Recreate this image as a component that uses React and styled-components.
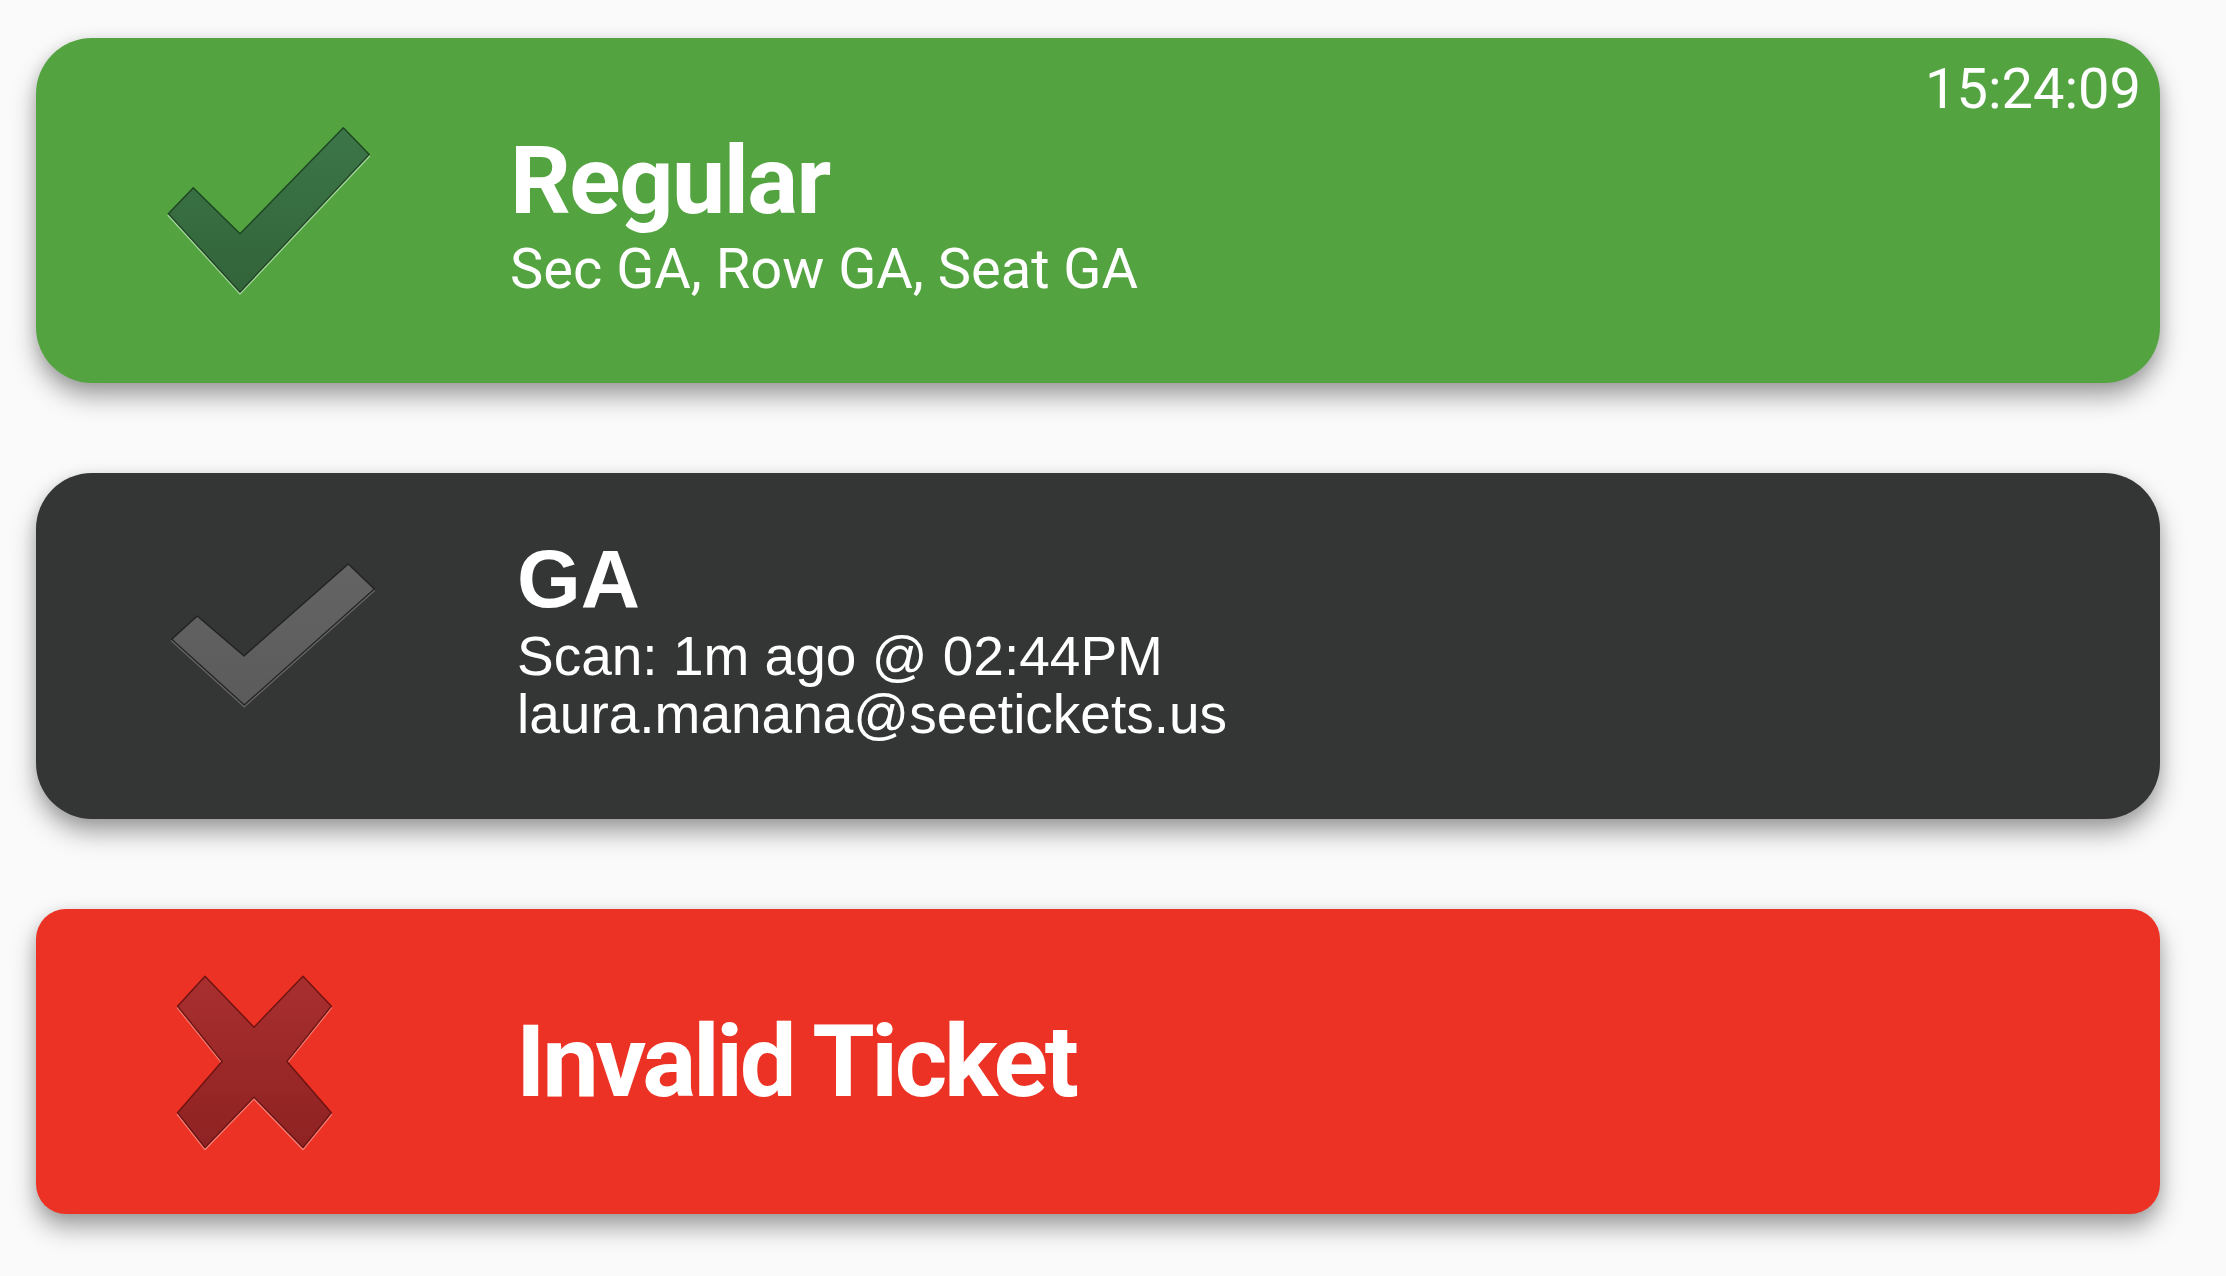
import React from 'react';
import styled, { createGlobalStyle } from 'styled-components';

const Global = createGlobalStyle`
  html, body { margin: 0; padding: 0; background: #fafafa; }
  body { font-family: Roboto, "Liberation Sans", sans-serif; -webkit-font-smoothing: antialiased; }
`;

const Page = styled.main`
  display: flex;
  flex-direction: column;
  gap: 90px;
  width: 2226px;
  box-sizing: border-box;
  padding: 38px 66px 62px 36px;
`;

const Card = styled.section`
  position: relative;
  display: flex;
  align-items: center;
  height: ${(p) => p.$h}px;
  border-radius: ${(p) => p.$r}px;
  background: ${(p) => p.$bg};
  color: #fff;
  box-shadow: 0 14px 24px rgba(0, 0, 0, 0.34), 0 2px 14px rgba(0, 0, 0, 0.1);
`;

const IconSlot = styled.div`
  flex: 0 0 476px;
  align-self: stretch;
  display: flex;
  align-items: center;
  padding-left: 110px;
  box-sizing: border-box;
`;

const Glyph = styled.svg`
  display: block;
  width: 260px;
  height: 220px;
  overflow: visible;
`;

const TextCol = styled.div`
  display: flex;
  flex-direction: column;
  padding-top: ${(p) => p.$pt || 0}px;
  padding-bottom: ${(p) => p.$pb || 0}px;
  margin-left: ${(p) => p.$ml || 0}px;
`;

const Title = styled.h1`
  margin: 0;
  font-family: ${(p) => p.$font};
  font-weight: 700;
  font-size: ${(p) => p.$size}px;
  line-height: ${(p) => p.$size}px;
  letter-spacing: ${(p) => p.$ls || 0}px;
  white-space: nowrap;
`;

const Line = styled.div`
  font-family: ${(p) => p.$font};
  font-weight: 400;
  font-size: ${(p) => p.$size}px;
  line-height: ${(p) => p.$lh}px;
  margin-top: ${(p) => p.$mt || 0}px;
  white-space: nowrap;
`;

const Clock = styled.div`
  position: absolute;
  top: 23px;
  right: 19px;
  font-family: Roboto, sans-serif;
  font-weight: 400;
  font-size: 56px;
  line-height: 56px;
  color: #fff;
`;

const Emboss = ({ id, points, from, to, edge, light }) => (
  <>
    <defs>
      <linearGradient id={id} x1="0" y1="0" x2="0" y2="1">
        <stop offset="0" stopColor={from} />
        <stop offset="1" stopColor={to} />
      </linearGradient>
    </defs>
    <polygon points={points} transform="translate(0,1.6)" fill={light} stroke={light} strokeWidth="1.6" strokeLinejoin="round" />
    <polygon points={points} fill={`url(#${id})`} stroke={edge} strokeWidth="1.4" strokeLinejoin="round" />
  </>
);

const GreenCheck = () => (
  <Glyph viewBox="0 0 260 220">
    <Emboss
      id="gchk"
      points="22.3,112.8 47.3,86.8 94,132.8 197.3,26.8 223.3,53.5 94,191.2"
      from="#3c7648"
      to="#326439"
      edge="rgba(22,55,28,0.85)"
      light="rgba(190,235,180,0.75)"
    />
  </Glyph>
);

const GreyCheck = () => (
  <Glyph viewBox="0 0 260 220">
    <Emboss
      id="dchk"
      points="25.7,103.3 51.3,80 98,120 202.3,28 228.3,53 98.3,169"
      from="#646464"
      to="#5b5b5b"
      edge="rgba(30,30,30,0.9)"
      light="rgba(110,110,110,0.8)"
    />
  </Glyph>
);

const RedCross = () => (
  <Glyph viewBox="0 0 260 220">
    <Emboss
      id="rx"
      points="59,24.2 108,75.2 157,24.2 185.4,54.2 141,109.5 185.4,160.8 157,195.8 108,145.2 59,195.8 31.5,160.8 76,109.5 31.5,54.2"
      from="#a92f2f"
      to="#8e2222"
      edge="rgba(100,15,15,0.9)"
      light="rgba(255,150,140,0.75)"
    />
  </Glyph>
);

export default function App() {
  return (
    <>
      <Global />
      <Page>
        <Card $h={345} $r={56} $bg="#53a441">
          <IconSlot>
            <GreenCheck />
          </IconSlot>
          <TextCol $pt={8} $ml={-2}>
            <Title $font="Roboto, sans-serif" $size={95} $ls={-1.5}>Regular</Title>
            <Line $font="Roboto, sans-serif" $size={56} $lh={56} $mt={13}>
              Sec GA, Row GA, Seat GA
            </Line>
          </TextCol>
          <Clock>15:24:09</Clock>
        </Card>

        <Card $h={346} $r={56} $bg="#343535">
          <IconSlot>
            <GreyCheck />
          </IconSlot>
          <TextCol $pb={12} $ml={5}>
            <Title $font={'"Liberation Sans", Arial, sans-serif'} $size={82}>GA</Title>
            <Line $font={'"Liberation Sans", Arial, sans-serif'} $size={55} $lh={56} $mt={8}>
              Scan: 1m ago @ 02:44PM
            </Line>
            <Line $font={'"Liberation Sans", Arial, sans-serif'} $size={55} $lh={56} $mt={2}>
              laura.manana@seetickets.us
            </Line>
          </TextCol>
        </Card>

        <Card $h={305} $r={30} $bg="#ec3224">
          <IconSlot>
            <RedCross />
          </IconSlot>
          <TextCol $ml={4}>
            <Title $font="Roboto, sans-serif" $size={101} $ls={-3.4}>Invalid Ticket</Title>
          </TextCol>
        </Card>
      </Page>
    </>
  );
}
